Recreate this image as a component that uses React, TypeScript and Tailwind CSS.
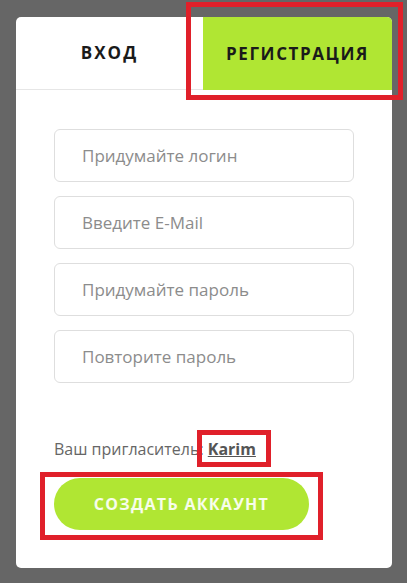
import React from 'react';

const fields = ['Придумайте логин', 'Введите E-Mail', 'Придумайте пароль', 'Повторите пароль'];

const App: React.FC = () => {
    return (
        <div className="min-h-[583px] w-[407px] bg-[#666666] pt-[17px] pl-[16px] font-['Open_Sans',sans-serif]">
            <div className="relative w-[376px] h-[551px] bg-white rounded-[5px] flex flex-col">
                <header className="flex h-[73px] border-b border-[#e6e6e6]">
                    <button className="flex-1 flex items-center justify-center text-[17px] font-bold tracking-[2px] text-[#1a1a1a]">
                        ВХОД
                    </button>
                    <button className="w-[189px] -mb-px flex items-center justify-center bg-[#b0e633] rounded-tr-[5px] text-[17px] font-bold tracking-[1.6px] text-[#1a1a1a]">
                        РЕГИСТРАЦИЯ
                    </button>
                </header>

                <section className="w-[300px] mx-auto mt-[39px] flex flex-col gap-[14px]">
                    {fields.map((f) => (
                        <input
                            key={f}
                            type="text"
                            placeholder={f}
                            className="h-[53px] w-full border border-[#dedede] rounded-[6px] pl-[27px] text-[17px] text-[#333] placeholder:text-[#8c8c8c] outline-none"
                        />
                    ))}
                </section>

                <section className="w-[300px] mx-auto mt-[54px]">
                    <p className="text-[16px] leading-[24px] text-[#666]">
                        Ваш пригласитель:{' '}
                        <a href="#" className="font-bold text-[#555] underline">Karim</a>
                    </p>
                    <button className="mt-[17px] w-[255px] h-[52px] rounded-full bg-[#b0e633] text-white/90 text-[16px] font-bold tracking-[1.3px]">
                        СОЗДАТЬ АККАУНТ
                    </button>
                </section>
            </div>

            {/* annotation boxes */}
            <div className="absolute left-[186px] top-[2px] w-[217px] h-[98px] border-[5px] border-[#e0202a]" />
            <div className="absolute left-[197px] top-[430px] w-[74px] h-[37px] border-[5px] border-[#e0202a]" />
            <div className="absolute left-[40px] top-[472px] w-[283px] h-[68px] border-[5px] border-[#e0202a]" />
        </div>
    );
};

export default App;
